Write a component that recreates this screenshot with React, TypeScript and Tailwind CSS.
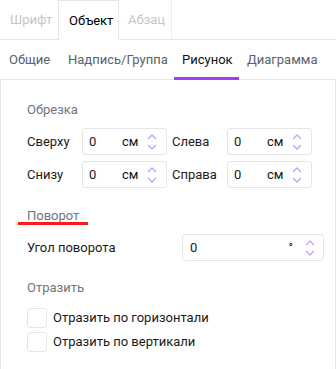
import React from "react";

const Spinner = () => (
  <svg width="10" height="20" viewBox="0 0 10 20" className="shrink-0">
    <path d="M1.5 6.5 L5 3 L8.5 6.5" fill="none" stroke="#c99cf7" strokeWidth="1.4" strokeLinecap="round" strokeLinejoin="round" />
    <path d="M1.5 13.5 L5 17 L8.5 13.5" fill="none" stroke="#c99cf7" strokeWidth="1.4" strokeLinecap="round" strokeLinejoin="round" />
  </svg>
);

const CmInput = () => (
  <div className="w-[85px] h-[27px] border border-[#e2e6ea] rounded-[3px] flex items-center pl-[6px] pr-[9px]">
    <span className="w-[33px]">0</span>
    <span className="flex-1 text-[#111]">см</span>
    <Spinner />
  </div>
);

const Check = ({ label }: { label: string }) => (
  <div className="flex items-center gap-[6px] h-[20px]">
    <div className="w-[20px] h-[20px] border border-[#e2e6ea] rounded-[3px] bg-white" />
    <span>{label}</span>
  </div>
);

export default function App() {
  return (
    <div
      className="w-[336px] h-[369px] overflow-hidden bg-white text-[13px] text-[#1a1a1a] leading-[20px]"
      style={{ fontFamily: '"Segoe UI", Roboto, sans-serif' }}
    >
      {/* top tabs */}
      <div className="h-[40px] flex border-b border-[#e2e6ea]">
        <div className="w-[58px] pl-[10px] flex items-center text-[#c6c6c6]">Шрифт</div>
        <div className="w-[61px] h-[40px] pl-[10px] flex items-center border-x border-t border-[#e2e6ea] bg-white text-black">
          Объект
        </div>
        <div className="w-[53px] pl-[9px] flex items-center border-r border-[#eceef1] text-[#c6c6c6]">Абзац</div>
      </div>

      {/* sub tabs */}
      <div className="h-[40px] flex items-stretch pl-[1px] border-b border-[#e2e6ea]">
        <div className="w-[59px] px-2 flex items-center text-[#59616d]">Общие</div>
        <div className="w-[114px] px-2 flex items-center text-[#59616d] whitespace-nowrap">Надпись/Группа</div>
        <div className="w-[65px] px-2 flex items-center text-[#111] relative">
          Рисунок
          <div className="absolute left-0 right-0 bottom-[-1px] h-[3px] bg-[#9d3ef0]" />
        </div>
        <div className="px-2 flex items-center text-[#59616d]">Диаграмма</div>
      </div>

      {/* panel */}
      <div className="h-[289px] border-x border-[#e2e6ea] pl-[26px] pt-[20px] relative">
        <div className="text-[#6d7480]">Обрезка</div>
        <div className="mt-[8px] grid grid-cols-[55px_85px_5px_55px_85px] gap-y-[6px] items-center">
          <span>Сверху</span>
          <CmInput />
          <span />
          <span>Слева</span>
          <CmInput />
          <span>Снизу</span>
          <CmInput />
          <span />
          <span>Справа</span>
          <CmInput />
        </div>

        <div className="mt-[18px] text-[#6d7480]">Поворот</div>
        <div className="absolute left-[17px] top-[142px] w-[70px] h-[3px] bg-[#ff1a1a]" />
        <div className="mt-[8px] flex items-center">
          <span className="w-[155px]">Угол поворота</span>
          <div className="w-[142px] h-[27px] border border-[#e2e6ea] rounded-[3px] flex items-center pl-[7px] pr-[8px]">
            <span className="flex-1">0</span>
            <span className="mr-[12px] text-[12px]">°</span>
            <Spinner />
          </div>
        </div>

        <div className="mt-[17px] text-[#6d7480]">Отразить</div>
        <div className="mt-[10px] flex flex-col gap-[4px]">
          <Check label="Отразить по горизонтали" />
          <Check label="Отразить по вертикали" />
        </div>
      </div>
    </div>
  );
}
